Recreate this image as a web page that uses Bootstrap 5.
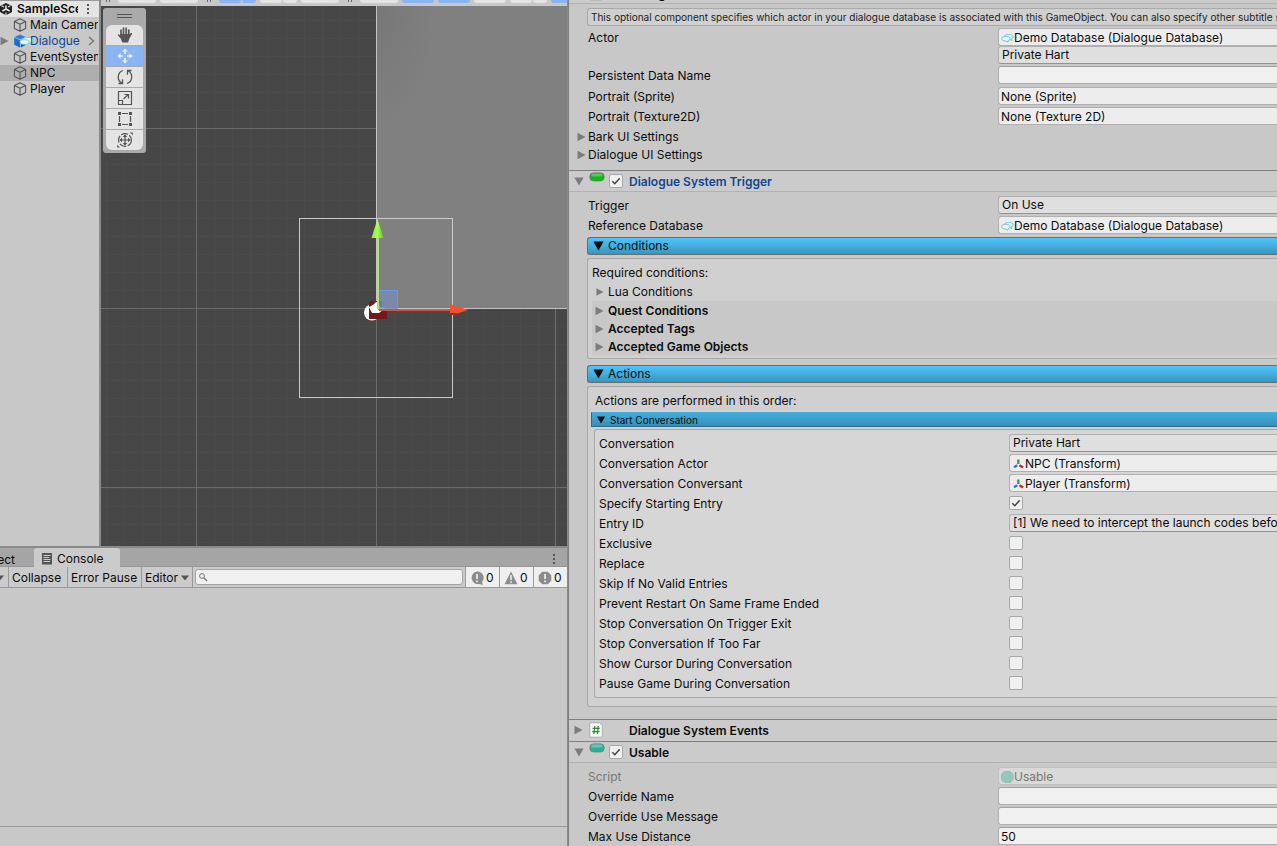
<!DOCTYPE html>
<html lang="en">
<head>
<meta charset="utf-8">
<meta name="viewport" content="width=device-width, initial-scale=1">
<title>SampleScene - Editor</title>
<link href="https://cdn.jsdelivr.net/npm/bootstrap@5.3.0/dist/css/bootstrap.min.css" rel="stylesheet">
<style>
:root{--panel:#c8c8c8;--head:#cbcbcb;--line:#7f7f7f;--soft:#b2b2b2;--ink:#0c0c0c}
body{font:12px/18px Inter,"Liberation Sans",sans-serif;color:var(--ink);background:var(--panel)}
button,input,select{font:inherit;color:inherit;border-radius:0}
button{background:none;border:0;padding:0;text-align:left}
svg{display:block;flex:none}
.editor{display:grid;grid-template-columns:minmax(0,568fr) minmax(0,709fr);min-width:900px}
.workspace{grid-template-rows:minmax(0,546px) minmax(0,1fr);display:grid}
.upper{display:grid;grid-template-columns:99px minmax(0,1fr)}

/* hierarchy */
.tree{border-top:1px solid #999}
.tree li{height:16px;line-height:16px;padding:0 1px 0 13px;gap:3px}
.tree li.scene-row{background:#e4e4e4;font-weight:600;padding-left:0;gap:4px}
.tree li.prefab{padding-left:0;gap:4px;color:#0f4791}
.tree li.picked{background:#aeaeae}
.tree a{color:inherit;text-decoration:none;overflow:hidden}
.scene-name{width:61px;overflow:hidden}
.prefab-icon{margin-right:-9px}

/* scene view */
.view{border-left:2px solid #8a8a8a;border-right:1px solid #8a8a8a}
.viewbar{height:6px;background:var(--panel);gap:4px}
.viewbar>*{flex-shrink:0}
.viewbar button{height:3px;width:32px;background:#e4e4e4;border-radius:0 0 3px 3px}
.viewbar .wide{width:38px}
.viewbar .split{display:flex;gap:1px}
.viewbar .split button{width:22px}
.viewbar .split button+button{width:14px}
.viewbar .grip{width:13px;height:2px}
.viewbar button.on{background:#8ab4f2}
.canvas{background:#474747}
.tools{left:2px;top:2px;width:43px;padding:6px 3px 3px;background:#aaa;border-radius:3px;gap:1px}
.tools hr{margin:0 11px 2px;border-top:1px solid #555;opacity:1}
.tools .handle{height:10px}
.tools button{height:20px;background:#e4e4e4;color:#555}
.tools button.on{background:#8ab4f2;color:#e8f0fc}

/* console */
.console{border-top:2px solid #8a8a8a;border-right:1px solid #8a8a8a}
.tabs{height:19px;background:#a5a5a5;border-bottom:1px solid #979797}
.tabs button{height:19px;line-height:20px;padding-top:2px}
.tabs .prev{width:34px;padding-right:19px}
.tabs .cur{background:var(--head);width:86px;padding-left:8px;border-radius:3px 3px 0 0}
.tabs .more{margin-right:11px}
.toolbar{height:21px;background:var(--head);border-bottom:1px solid #999}
.toolbar button{border-right:1px solid #999;line-height:20px;padding:1px 0 0 3px}
.toolbar .t-clear{width:9px;padding-left:0}
.toolbar .t-collapse{width:59px}
.toolbar .t-pause{width:74px}
.toolbar .t-editor{width:51px;gap:3px}
.toolbar .search{padding:0 2px}
.toolbar input{border:1px solid #a3a3a3;border-radius:3px;background:#f0f0f0;height:16px;padding-left:16px;outline:0}
.toolbar button.counter{width:34px;background:#efefef;padding:1px 0 0 4px;gap:2px;border-right:0;border-left:1px solid #999}
.status{height:20px;border-top:1px solid #999}

/* inspector */
.inspector{border-left:1px solid #7f7f7f}
.comp{height:22px;background:var(--head);border-top:1px solid var(--line);border-bottom:1px solid var(--soft);padding-left:5px;font-weight:600}
.comp.folded{border-bottom-color:var(--head)}
.comp.under{margin-top:-18px}
.comp .arw{width:15px}
.comp .kind{width:20px}
.comp .onoff{width:20px}
.comp .nm{padding-top:2px}
.comp .scr{color:#0f4791}
.comp-body{padding:4px 0 6px 18px;gap:2px}
.comp-body.roomy{padding-bottom:12px}
.prop{display:grid;grid-template-columns:410px minmax(0,1fr);height:18px}
.comp-body>.prop,.sect>.prop{margin-left:1px}
.prop.tall{height:36px}
.prop>label{line-height:18px;padding-top:1px;height:18px;white-space:nowrap}
.sect{gap:2px;margin-top:1px}
.sect.outdent{margin-left:-10px}
.fold{display:flex;align-items:center;width:100%;height:18px;white-space:nowrap;gap:4px}
.outdent .fold{gap:2px}
.shade .fold{padding-top:1px}
.fold.tall-fold{height:19px}
.fld{display:flex;width:100%;height:18px;line-height:16px;border:1px solid #b0b0b0;border-right:0;border-radius:3px 0 0 3px;background:#ededed;padding:2px 0 0 2px;white-space:nowrap;overflow:hidden;outline:0;align-items:center;appearance:none}
input.fld{background:#f0f0f0;border-top-color:#a0a0a0;padding-top:0}
select.fld{background:#dfdfdf;border-bottom-color:#939393;padding:0 0 0 3px;display:block}
.fld.off{background:#d9d9d9;border-color:#c0c0c0;color:#777}
.dim{color:#777}
.tick{appearance:none;width:14px;height:14px;margin:0;border:1px solid #a8a8a8;border-radius:2px;background:#f0f0f0;display:block}
.tick:checked{background:#f0f0f0 url("data:image/svg+xml,%3Csvg xmlns='http://www.w3.org/2000/svg' viewBox='0 0 12 12'%3E%3Cpath d='M2.3 6.2 4.8 8.7 9.7 3.2' fill='none' stroke='%23444' stroke-width='1.5'/%3E%3C/svg%3E") center/12px}
.help{height:18px;font-size:10px;line-height:16px;border:1px solid #a9a9a9;border-right:0;border-radius:3px 0 0 3px;background:#d0d0d0;padding-left:3px;white-space:nowrap;overflow:hidden;color:#1c1c1c}
.bar{width:100%;height:18px;border:1px solid #6b6b6b;border-right:0;border-radius:3px 0 0 3px;background:linear-gradient(#4fc5fb,#3b95bd);padding-left:5px;gap:4px;line-height:16px;margin-top:1px}
.bar.next{margin-top:4px}
.bar.thin-bar{height:15px;font-size:10px;line-height:14px;border-color:#45b0e0 #45b0e0 #2c6c8b #2c6c8b;background:linear-gradient(#40addc,#3890b8);border-radius:0;padding-left:4px;margin-top:2px}
.box{border:1px solid #a8a8a8;border-right:0;border-radius:3px 0 0 3px;background:#d0d0d0;margin-top:1px}
.conds{padding:5px 0 3px 4px}
.acts{padding:5px 0 8px 3px}
.shade{background:var(--panel);padding-left:3px}
.inner{background:#d6d6d6;margin:2px 0 0 3px;padding:4px 0 3px 4px}
.inner .prop{height:20px}
.inner .tick{margin-top:2px}
</style>
</head>
<body>
<svg width="0" height="0" class="position-absolute" aria-hidden="true">
  <defs>
    <symbol id="cube" viewBox="0 0 14 14"><path d="M7 .8 12.6 3.4V10.6L7 13.3 1.4 10.6V3.4ZM1.4 3.4 7 6.2 12.6 3.4M7 6.2V13.3" fill="none" stroke="#555" stroke-width="1.1" stroke-linejoin="round"/></symbol>
    <symbol id="bluecube" viewBox="0 0 22 14"><path d="M1.2 3.6 7 6.3V13.5L1.2 10.7Z" fill="#1a6fc9"/><path d="M7.8 6.3 13 3.6V10.7L7.8 13.5Z" fill="#0f5fb5"/><path d="M1.5 2.9 7 .5 12.500 2.900 7 5.500Z" fill="#2683dc"/><ellipse cx="15" cy="6.300" rx="5.800" ry="2.900" fill="#dff6f6" stroke="#7fcfd6"/><ellipse cx="11.500" cy="8" rx="4.500" ry="2.300" fill="#e8fafa" stroke="#7fcfd6"/></symbol>
    <symbol id="right" viewBox="0 0 9 10"><path d="M.5.8 8.500 5 .5 9.200Z" fill="currentColor"/></symbol>
    <symbol id="down" viewBox="0 0 10 9"><path d="M.4.5H9.600L5 8.500Z" fill="currentColor"/></symbol>
    <symbol id="chat" viewBox="0 0 13 10"><path d="M3.500 3C4.500 1 11 .8 11.900 3 12.300 4.300 11.500 5.600 10.600 5.900L10.900 7.900 8.800 6.300" fill="#e6f8f9" stroke="#73c8d2"/><path d="M5 8.100C1.900 8 .6 6.800.7 5.500.9 3.400 3.500 3.100 6 3.300 9.600 3.500 9.900 7.200 7 7.900L7 9.200Z" fill="#e6f8f9" stroke="#57b9c5" stroke-width=".8"/></symbol>
    <symbol id="axes" viewBox="0 0 13 10"><path d="M6.300.5V5" stroke="#4c9455" stroke-width="2.400"/><path d="M5.300 6.300 2 8.300" stroke="#3277cf" stroke-width="2.300"/><path d="M7.400 6.300 11 8.500" stroke="#bd2828" stroke-width="2.300"/></symbol>
    <symbol id="pill" viewBox="0 0 16 10"><rect x=".7" y=".7" width="14.600" height="8.400" rx="4" fill="currentColor" stroke="#777" stroke-opacity=".6"/><rect x="2.500" y="1.600" width="11" height="2.800" rx="1.400" fill="#fff" opacity=".28"/></symbol>
    <symbol id="script" viewBox="0 0 14 16"><path d="M2 .8H10.500L13.300 3.600V14Q13.300 15.200 12 15.200H2Q.8 15.200.8 14V2Q.8.8 2 .8Z" fill="#fafafa" stroke="#aaa"/><path d="M5.800 4 4.900 12M9.300 4 8.400 12M3.500 6.400H10.800M3.200 9.600H10.500" stroke="#2f8a34" stroke-width="1.300"/></symbol>
    <symbol id="dots" viewBox="0 0 4 12"><path d="M1 1h2v2H1zM1 5h2v2H1zM1 9h2v2H1z" fill="#555"/></symbol>
    <symbol id="grip" viewBox="0 0 13 2"><path d="M5 0h1v2H5zM8 0h1v2H8z" fill="#666"/></symbol>
  </defs>
</svg>

<div class="editor vh-100 overflow-hidden">
  <div class="workspace overflow-hidden">
    <div class="upper">
      <nav class="overflow-hidden" aria-label="Hierarchy">
        <ul class="tree list-unstyled mb-0 text-nowrap">
          <li class="scene-row d-flex align-items-center">
            <svg width="13" height="14" viewBox="0 0 13 14"><path d="M6 1 12 4V10L6 13.200 0 10V4Z" fill="#222"/><path d="M6 7V3.400M6 7 2.400 9M6 7 9.600 9" stroke="#e4e4e4" stroke-width="1.600"/><path d="M1.500 3.800 4 5M10.500 3.800 8 5M6 13V10.500" stroke="#e4e4e4" stroke-width="1.200"/></svg>
            <span class="scene-name">SampleScene</span>
            <button type="button" aria-label="Scene menu"><svg class="ms-1" width="4" height="12"><use href="#dots"/></svg></button>
          </li>
          <li class="d-flex align-items-center"><svg width="14" height="14"><use href="#cube"/></svg><a href="#">Main Camera</a></li>
          <li class="prefab d-flex align-items-center"><svg width="9" height="10" color="#7c7c7c"><use href="#right"/></svg><svg class="prefab-icon" width="22" height="14"><use href="#bluecube"/></svg><a href="#" class="flex-shrink-0">Dialogue</a><svg class="ms-1" width="7" height="10" viewBox="0 0 7 10"><path d="M1 1 5.500 5 1 9" fill="none" stroke="#777" stroke-width="1.400"/></svg></li>
          <li class="d-flex align-items-center"><svg width="14" height="14"><use href="#cube"/></svg><a href="#">EventSystem</a></li>
          <li class="picked d-flex align-items-center"><svg width="14" height="14"><use href="#cube"/></svg><a href="#">NPC</a></li>
          <li class="d-flex align-items-center"><svg width="14" height="14"><use href="#cube"/></svg><a href="#">Player</a></li>
        </ul>
      </nav>

      <main class="view d-flex flex-column overflow-hidden">
        <div class="viewbar d-flex overflow-hidden">
          <svg class="grip"><use href="#grip"/></svg>
          <button class="wide" aria-label="Pivot"></button><button class="wide" aria-label="Local"></button>
          <svg class="grip"><use href="#grip"/></svg>
          <div class="split"><button class="on" aria-label="Grid"></button><button class="on" aria-label="Grid options"></button></div>
          <div class="split"><button aria-label="Snap"></button><button aria-label="Snap options"></button></div>
          <button class="wide" aria-label="Increment"></button>
          <svg class="grip"><use href="#grip"/></svg>
          <button class="wide" aria-label="Shading"></button>
          <button class="on" aria-label="2D"></button><button class="on" aria-label="Light"></button>
          <button aria-label="Audio"></button>
          <div class="split"><button aria-label="Effects"></button><button aria-label="Effects options"></button></div>
          <button class="on" aria-label="Visibility"></button>
        </div>
        <div class="canvas flex-fill position-relative overflow-hidden">
          <svg width="100%" height="100%" aria-label="Scene">
            <defs>
              <pattern id="minor" x="5" y="14" width="18" height="18" patternUnits="userSpaceOnUse"><path d="M.5 0V18M0 .5H18" stroke="#4b4b4b"/></pattern>
              <radialGradient id="glow" cx="0" cy="0" r="1"><stop offset="0" stop-color="#777"/><stop offset="1" stop-color="#808080"/></radialGradient>
              <linearGradient id="cone"><stop offset="0" stop-color="#8de83c"/><stop offset=".5" stop-color="#aaff50"/><stop offset="1" stop-color="#68bd2c"/></linearGradient>
            </defs>
            <rect width="100%" height="100%" fill="url(#minor)"/>
            <path d="M95.500 0V540M275.500 0V540M454.500 0V540M0 122.500H900M0 302.500H900M0 481.500H900" stroke="#6b6b6b"/>
            <rect x="276" width="800" height="302" fill="#808080"/>
            <rect x="276" width="60" height="120" fill="url(#glow)"/>
            <path d="M275.500 0V302.500H1100" fill="none" stroke="#c4c4c4"/>
            <rect x="198.500" y="212.500" width="153" height="179" fill="none" stroke="#c9cbc9"/>
            <circle cx="271" cy="306.500" r="8" fill="#fff"/>
            <path d="M268 295H281V303H286V313H268Z" fill="#711b1b"/>
            <path d="M268 301 272 299 275 296 278 297 279 301 284 302 282 304 278 307H271Z" fill="#fff"/>
            <rect x="277.500" y="284.500" width="19" height="19" fill="#7b89b5" fill-opacity=".8" stroke="#6797f8"/>
            <path d="M277 303V231" stroke="#a8e56c" stroke-width="2"/>
            <path d="M276.500 213 282.500 232H270.500Z" fill="url(#cone)"/>
            <path d="M278 304H350" stroke="#d4513c" stroke-width="2"/>
            <path d="M349 298V310L367 304Z" fill="#f4502e"/><path d="M349 307V310L357 307Z" fill="#88301f"/>
          </svg>
          <div class="tools position-absolute d-flex flex-column" role="toolbar" aria-label="Scene tools">
            <div class="handle"><hr><hr></div>
            <button class="d-flex align-items-center justify-content-center rounded-top" aria-label="View"><svg width="16" height="16" viewBox="0 0 16 16"><path d="M4 9.500V3.200M6.500 8V1.200M9.200 8V1.200M11.800 9V3" stroke="currentColor" stroke-width="1.700" stroke-linecap="round"/><path d="M3.200 7H12.600L14 6Q15.600 5.800 15 7L12.500 11.200 11 15.500H5.300L3.800 11.800 1 8.500Q.3 7.300 1.600 7.200L3.200 8.500Z" fill="currentColor"/></svg></button>
            <button class="on d-flex align-items-center justify-content-center" aria-label="Move"><svg width="16" height="16" viewBox="0 0 16 16"><path d="M8 1.500V6M8 10V14.500M1.500 8H6M10 8H14.500" stroke="currentColor" stroke-width="1.700"/><path d="M5.200 3.500 8 .4 10.800 3.500ZM5.200 12.500 8 15.600 10.800 12.500ZM3.500 5.200.4 8 3.500 10.800ZM12.500 5.200 15.600 8 12.500 10.800Z" fill="currentColor"/></svg></button>
            <button class="d-flex align-items-center justify-content-center" aria-label="Rotate"><svg width="16" height="16" viewBox="0 0 16 16" fill="none" stroke="currentColor" stroke-width="1.300"><path d="M6 1.500C.3 3.300-.5 11.300 5 14.200M1.500 14.500H5.500V10.300M10 14.500C15.700 12.700 16.500 4.700 11 1.800M14.500 1.500H10.500V5.700"/></svg></button>
            <button class="d-flex align-items-center justify-content-center" aria-label="Scale"><svg width="16" height="16" viewBox="0 0 16 16" fill="none" stroke="currentColor" stroke-width="1.200"><path d="M1.500 1.500H14.500V14.500H1.500ZM1.500 10.500H5.500V14.500M6.500 9 11.300 4.500M7.500 4.500H11.500V8.500"/></svg></button>
            <button class="d-flex align-items-center justify-content-center" aria-label="Rect"><svg width="16" height="16" viewBox="0 0 16 16"><path d="M5 2.500H11M5 13.500H11M2.500 5V11M13.500 5V11" stroke="currentColor" stroke-width="1.200"/><path d="M1 1H4V4H1ZM12 1H15V4H12ZM1 12H4V15H1ZM12 12H15V15H12Z" fill="currentColor"/></svg></button>
            <button class="d-flex align-items-center justify-content-center rounded-bottom" aria-label="Transform"><svg width="16" height="16" viewBox="0 0 16 16"><circle cx="8" cy="8" r="6.400" fill="none" stroke="currentColor" stroke-width="1.200" stroke-dasharray="7 1.500"/><path d="M8 3V13M3 8H13" stroke="currentColor" stroke-width="1.200"/><path d="M5.700 5 8 2.500 10.300 5ZM5.700 11 8 13.500 10.300 11ZM5 5.700 2.500 8 5 10.300ZM11 5.700 13.500 8 11 10.300ZM13 .5H15.800V3.300ZM.2 12.700V15.500H3Z" fill="currentColor"/></svg></button>
          </div>
        </div>
      </main>
    </div>

    <section class="console d-flex flex-column overflow-hidden" aria-label="Console">
      <div class="tabs d-flex">
        <button class="prev overflow-hidden d-flex justify-content-end text-nowrap">Project</button>
        <button class="cur d-flex align-items-center gap-1"><svg width="11" height="12" viewBox="0 0 11 12"><path d="M0 0H10V11.500H0Z" fill="#555"/><path d="M1.500 2.500H8.500M1.500 4.500H7M1.500 6.500H8.500M1.500 8.500H8" stroke="#cbcbcb"/></svg><span>Console</span></button>
        <button class="more ms-auto" aria-label="Console menu"><svg width="4" height="12"><use href="#dots"/></svg></button>
      </div>
      <div class="toolbar d-flex">
        <button class="t-clear d-flex align-items-center justify-content-end overflow-hidden pe-1" aria-label="Clear options"><svg width="8" height="6" viewBox="0 0 8 6"><path d="M0 .5H8L4 5.500Z" fill="#555"/></svg></button>
        <button class="t-collapse">Collapse</button>
        <button class="t-pause">Error Pause</button>
        <button class="t-editor d-flex align-items-center">Editor<svg width="8" height="6" viewBox="0 0 8 6"><path d="M0 .5H8L4 5.500Z" fill="#555"/></svg></button>
        <div class="search flex-fill position-relative d-flex align-items-center">
          <svg class="position-absolute ms-1" width="9" height="9" viewBox="0 0 9 9"><circle cx="3" cy="3" r="2.400" fill="none" stroke="#777"/><path d="M4.800 4.800 8 8" stroke="#777" stroke-width="1.300"/></svg>
          <input class="w-100" type="search" aria-label="Search console">
        </div>
        <button class="counter d-flex align-items-center"><svg width="14" height="14" viewBox="0 0 14 14"><path d="M7 .5A6.300 6.300 0 1 0 9 13L12.800 14 12 11A6.300 6.300 0 0 0 7 .5Z" fill="#8c8c8c"/><path d="M7 3V8M7 9.500V11.200" stroke="#efefef" stroke-width="1.700"/></svg>0</button>
        <button class="counter d-flex align-items-center"><svg width="14" height="14" viewBox="0 0 14 14"><path d="M7 .5 13.500 13.300H.5Z" fill="#8c8c8c"/><path d="M7 4V9M7 10.300V12" stroke="#efefef" stroke-width="1.600"/></svg>0</button>
        <button class="counter d-flex align-items-center"><svg width="14" height="14" viewBox="0 0 14 14"><path d="M4.300.7H9.700L13.300 4.300V9.700L9.700 13.300H4.300L.7 9.700V4.300Z" fill="#8c8c8c"/><path d="M7 3V8M7 9.500V11.200" stroke="#efefef" stroke-width="1.700"/></svg>0</button>
      </div>
      <div class="flex-fill"></div>
      <div class="status"></div>
    </section>
  </div>

  <aside class="inspector overflow-hidden text-nowrap" aria-label="Inspector">
    <header class="comp under d-flex align-items-center"><span class="arw"></span><span class="kind"><svg width="14" height="16"><use href="#script"/></svg></span><span class="onoff"></span><span class="nm">Dialogue Actor</span></header>
    <div class="comp-body d-flex flex-column">
      <div class="help">This optional component specifies which actor in your dialogue database is associated with this GameObject. You can also specify other subtitle settings.</div>
      <div class="prop tall"><label for="actordb">Actor</label><div>
        <button class="fld" id="actordb"><svg width="13" height="10"><use href="#chat"/></svg>Demo Database (Dialogue Database)</button>
        <select class="fld" aria-label="Actor name"><option>Private Hart</option></select></div></div>
      <div class="prop"><label for="pdn">Persistent Data Name</label><input class="fld" id="pdn" type="text"></div>
      <div class="sect d-flex flex-column">
        <div class="prop"><label for="spr">Portrait (Sprite)</label><button class="fld" id="spr">None (Sprite)</button></div>
        <div class="prop"><label for="tex">Portrait (Texture2D)</label><button class="fld" id="tex">None (Texture 2D)</button></div>
      </div>
      <div class="sect outdent">
        <button class="fold"><svg width="9" height="10" color="#7c7c7c"><use href="#right"/></svg>Bark UI Settings</button>
        <button class="fold"><svg width="9" height="10" color="#7c7c7c"><use href="#right"/></svg>Dialogue UI Settings</button>
      </div>
    </div>

    <header class="comp d-flex align-items-center"><span class="arw"><svg width="10" height="9" color="#7c7c7c"><use href="#down"/></svg></span><span class="kind"><svg class="mb-2" width="16" height="10" color="#17b31c"><use href="#pill"/></svg></span><span class="onoff"><input class="tick" type="checkbox" checked aria-label="Dialogue System Trigger enabled"></span><span class="nm scr">Dialogue System Trigger</span></header>
    <div class="comp-body roomy d-flex flex-column">
      <div class="prop"><label for="trg">Trigger</label><select class="fld" id="trg"><option>On Use</option></select></div>
      <div class="prop"><label for="rdb">Reference Database</label><button class="fld" id="rdb"><svg width="13" height="10"><use href="#chat"/></svg>Demo Database (Dialogue Database)</button></div>
      <button class="bar d-flex align-items-center"><svg width="11" height="10"><use href="#down"/></svg>Conditions</button>
      <div class="box conds">
        <div>Required conditions:</div>
        <button class="fold tall-fold ps-1"><svg width="8" height="10" color="#7c7c7c"><use href="#right"/></svg>Lua Conditions</button>
        <div class="shade">
          <button class="fold fw-semibold"><svg width="9" height="10" color="#7c7c7c"><use href="#right"/></svg>Quest Conditions</button>
          <button class="fold fw-semibold"><svg width="9" height="10" color="#7c7c7c"><use href="#right"/></svg>Accepted Tags</button>
          <button class="fold fw-semibold"><svg width="9" height="10" color="#7c7c7c"><use href="#right"/></svg>Accepted Game Objects</button>
        </div>
      </div>
      <button class="bar next d-flex align-items-center"><svg width="11" height="10"><use href="#down"/></svg>Actions</button>
      <div class="box acts">
        <div class="ps-1">Actions are performed in this order:</div>
        <button class="bar thin-bar d-flex align-items-center"><svg width="10" height="8"><use href="#down"/></svg>Start Conversation</button>
        <div class="box inner">
          <div class="prop"><label for="cv">Conversation</label><select class="fld" id="cv"><option>Private Hart</option></select></div>
          <div class="prop"><label for="ca">Conversation Actor</label><button class="fld" id="ca"><svg width="13" height="10"><use href="#axes"/></svg>NPC (Transform)</button></div>
          <div class="prop"><label for="cc">Conversation Conversant</label><button class="fld" id="cc"><svg width="13" height="10"><use href="#axes"/></svg>Player (Transform)</button></div>
          <div class="prop"><label for="se">Specify Starting Entry</label><input class="tick" id="se" type="checkbox" checked></div>
          <div class="prop"><label for="ei">Entry ID</label><select class="fld" id="ei"><option>[1] We need to intercept the launch codes before</option></select></div>
          <div class="prop"><label for="k1">Exclusive</label><input class="tick" id="k1" type="checkbox"></div>
          <div class="prop"><label for="k2">Replace</label><input class="tick" id="k2" type="checkbox"></div>
          <div class="prop"><label for="k3">Skip If No Valid Entries</label><input class="tick" id="k3" type="checkbox"></div>
          <div class="prop"><label for="k4">Prevent Restart On Same Frame Ended</label><input class="tick" id="k4" type="checkbox"></div>
          <div class="prop"><label for="k5">Stop Conversation On Trigger Exit</label><input class="tick" id="k5" type="checkbox"></div>
          <div class="prop"><label for="k6">Stop Conversation If Too Far</label><input class="tick" id="k6" type="checkbox"></div>
          <div class="prop"><label for="k7">Show Cursor During Conversation</label><input class="tick" id="k7" type="checkbox"></div>
          <div class="prop"><label for="k8">Pause Game During Conversation</label><input class="tick" id="k8" type="checkbox"></div>
        </div>
      </div>
    </div>

    <header class="comp folded d-flex align-items-center"><span class="arw"><svg width="9" height="10" color="#7c7c7c"><use href="#right"/></svg></span><span class="kind"><svg width="14" height="16"><use href="#script"/></svg></span><span class="onoff"></span><span class="nm">Dialogue System Events</span></header>
    <header class="comp d-flex align-items-center"><span class="arw"><svg width="10" height="9" color="#7c7c7c"><use href="#down"/></svg></span><span class="kind"><svg class="mb-2" width="16" height="10" color="#2fae97"><use href="#pill"/></svg></span><span class="onoff"><input class="tick" type="checkbox" checked aria-label="Usable enabled"></span><span class="nm">Usable</span></header>
    <div class="comp-body d-flex flex-column">
      <div class="prop"><label for="sc" class="dim">Script</label><button class="fld off" id="sc" disabled><svg width="13" height="12" viewBox="0 0 13 12"><rect x=".5" y=".5" width="11.500" height="11" rx="4.500" fill="#8fcabd" stroke="#9fb5b0"/></svg>Usable</button></div>
      <div class="prop"><label for="on">Override Name</label><input class="fld" id="on" type="text"></div>
      <div class="prop"><label for="om">Override Use Message</label><input class="fld" id="om" type="text"></div>
      <div class="prop"><label for="md">Max Use Distance</label><input class="fld" id="md" type="text" value="50"></div>
    </div>
  </aside>
</div>
<script src="https://cdn.jsdelivr.net/npm/bootstrap@5.3.0/dist/js/bootstrap.bundle.min.js"></script>
</body>
</html>
